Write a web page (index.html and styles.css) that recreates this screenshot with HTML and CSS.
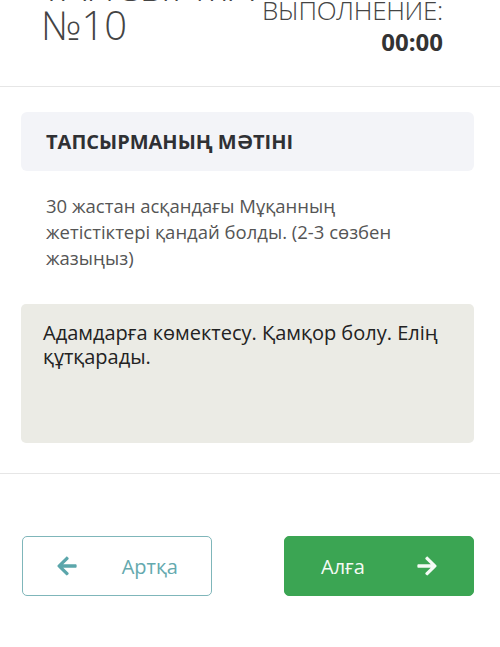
FILE: index.html
```html
<!DOCTYPE html>
<html lang="kk">
<head>
<meta charset="utf-8">
<link rel="stylesheet" href="styles.css">
</head>
<body>
<header class="header">
  <div class="title">ТАПСЫРМА<br>№10</div>
  <div class="timer">
    <div class="timer-label">ВРЕМЯ НА<br>ВЫПОЛНЕНИЕ:</div>
    <div class="timer-value">00:00</div>
  </div>
</header>
<main class="content">
  <div class="task-head">ТАПСЫРМАНЫҢ МӘТІНІ</div>
  <p class="question">30 жастан асқандағы Мұқанның жетістіктері қандай болды. (2-3 сөзбен жазыңыз)</p>
  <div class="answer">Адамдарға көмектесу. Қамқор болу. Елің құтқарады.</div>
</main>
<footer class="footer">
  <button class="btn btn-back">
    <svg class="arrow" viewBox="0 0 448 512"><path fill="currentColor" d="M257.5 445.1l-22.2 22.2c-9.4 9.4-24.6 9.4-33.9 0L7 273c-9.4-9.4-9.4-24.6 0-33.9L201.4 44.7c9.4-9.4 24.6-9.4 33.9 0l22.2 22.2c9.5 9.5 9.3 25-.4 34.3L136.6 216H424c13.3 0 24 10.7 24 24v32c0 13.3-10.7 24-24 24H136.6l120.5 114.8c9.8 9.3 10 24.8.4 34.3z"/></svg>
    <span>Артқа</span>
  </button>
  <button class="btn btn-next">
    <span>Алға</span>
    <svg class="arrow" viewBox="0 0 448 512"><path fill="currentColor" d="M190.5 66.9l22.2-22.2c9.4-9.4 24.6-9.4 33.9 0L441 239c9.4 9.4 9.4 24.6 0 33.9L246.6 467.3c-9.4 9.4-24.6 9.4-33.9 0l-22.2-22.2c-9.5-9.5-9.3-25 .4-34.3L311.4 296H24c-13.3 0-24-10.7-24-24v-32c0-13.3 10.7-24 24-24h287.4L190.9 101.2c-9.8-9.3-10-24.8-.4-34.3z"/></svg>
  </button>
</footer>
</body>
</html>
```
FILE: styles.css
```css
* { box-sizing: border-box; }
html, body { margin: 0; padding: 0; background: #fff; }
body {
  width: 500px;
  height: 647px;
  overflow: hidden;
  font-family: "Open Sans", "Noto Sans", sans-serif;
  color: #333;
}
.header {
  height: 87px;
  display: flex;
  justify-content: space-between;
  align-items: flex-start;
  padding: 0 57px 0 41px;
  border-bottom: 1px solid #e6e6e6;
  overflow: hidden;
}
.title {
  margin-top: -34px;
  font-size: 40px;
  line-height: 39px;
  font-weight: 300;
  color: #444;
  white-space: nowrap;
}
.timer { text-align: right; }
.timer-label {
  margin-top: -35px;
  font-size: 26px;
  line-height: 30px;
  font-weight: 300;
  color: #444;
  letter-spacing: -0.3px;
}
.timer-value {
  margin-top: 3px;
  font-size: 24px;
  line-height: 28px;
  font-weight: 700;
  color: #333;
}
.content {
  padding: 25px 26px 30px 21px;
  border-bottom: 1px solid #e6e6e6;
}
.task-head {
  height: 59px;
  display: flex;
  align-items: center;
  padding-left: 25px;
  background: #f3f4f8;
  border-radius: 6px;
  font-size: 20px;
  font-weight: 700;
  color: #2f3034;
}
.question {
  margin: 22px 0 0;
  padding: 0 40px 0 25px;
  font-size: 18.5px;
  line-height: 26px;
  color: #555;
}
.answer {
  margin-top: 33px;
  height: 139px;
  padding: 17px 8px 0 22px;
  background: #ebebe5;
  border-radius: 5px;
  font-size: 20px;
  line-height: 24px;
  color: #222;
}
.footer {
  display: flex;
  justify-content: space-between;
  padding: 62px 26px 0 22px;
}
.btn {
  width: 190px;
  height: 60px;
  display: flex;
  align-items: center;
  justify-content: space-between;
  border-radius: 5px;
  font-family: "Open Sans", "Noto Sans", sans-serif;
  font-size: 20px;
  cursor: pointer;
}
.btn-back {
  padding: 0 33px 0 34px;
  background: #fff;
  border: 1px solid #7fb6ba;
  color: #64a9ae;
}
.btn-back .arrow { color: #5ba6ab; }
.btn-next {
  padding: 0 36px;
  background: #3ba553;
  border: 1px solid #3ba553;
  color: #f4faf5;
}
.arrow { width: 20px; height: 22px; display: block; }
```
